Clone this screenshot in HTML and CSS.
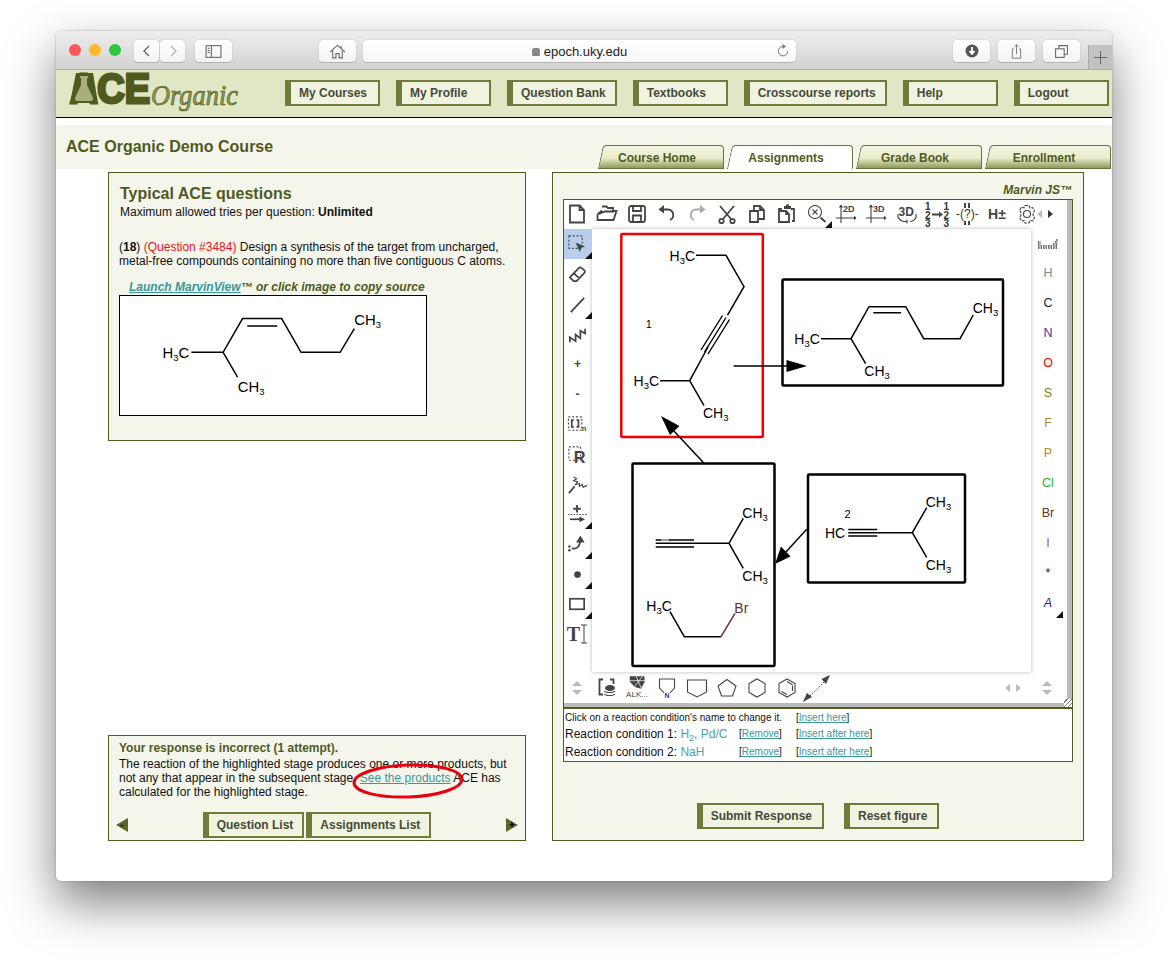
FILE: index.html
```html
<!DOCTYPE html>
<html lang="en">
<head>
    <meta charset="UTF-8">
    <meta name="viewport" content="width=device-width, initial-scale=1.0">
    <title>ACE Organic</title>
    <link rel="stylesheet" href="styles.css">
</head>
<body>
<div class="window">
    <div class="browser-bar">
        <div class="lights"><span class="light red"></span><span class="light yellow"></span><span class="light green"></span></div>
        <div class="bbtn-pair">
            <span class="bbtn nav-half"><svg class="bico" viewBox="0 0 14 14"><path d="M9 2 4 7l5 5"/></svg></span>
            <span class="bbtn nav-half"><svg class="bico faint" viewBox="0 0 14 14"><path d="m5 2 5 5-5 5"/></svg></span>
        </div>
        <span class="bbtn sidebar-btn"><svg class="bico thin" viewBox="0 0 16 14"><rect x="1" y="1.500" width="14" height="11"/><path d="M6 1.500v11M2.500 4H4.500M2.500 6H4.500M2.500 8H4.500"/></svg></span>
        <span class="bbtn home-btn"><svg class="bico thin" viewBox="0 0 16 14"><path d="M1 7.500 8 1l7 6.500M3.500 6v7h3V9h3v4h3V6M11.500 2v2.500"/></svg></span>
        <div class="address"><span class="lock"></span>epoch.uky.edu<svg class="reload" viewBox="0 0 14 14"><path d="M7 2.500a4.700 4.700 0 1 0 4.700 4.700"/><path class="solid" d="M6.500 0 10 2.500 6.500 5z"/></svg></div>
        <span class="bbtn right-btn"><svg class="bico" viewBox="0 0 14 14"><circle class="solid" cx="7" cy="7" r="6.500"/><path class="white-line" d="M7 3v6M4.500 7 7 9.800 9.500 7"/></svg></span>
        <span class="bbtn right-btn"><svg class="bico thin" viewBox="0 0 14 18"><path d="M4 6H2v11h10V6h-2M7 12V1M4.500 3.500 7 1l2.500 2.500"/></svg></span>
        <span class="bbtn right-btn"><svg class="bico thin" viewBox="0 0 14 14"><rect x="1.500" y="4.500" width="8" height="8"/><path d="M4.500 4.500v-3h8v8h-3"/></svg></span>
        <span class="new-tab"><svg class="bico thin" viewBox="0 0 14 14"><path d="M7 1v12M1 7h12"/></svg></span>
    </div>

    <header class="site-header">
        <svg class="logo" viewBox="68 70 185 47">
            <text class="logo-ace" x="70" y="103" textLength="80" lengthAdjust="spacingAndGlyphs">ACE</text>
            <path class="logo-block" d="M76 73h17l5 30H70z"/>
            <path class="logo-flask" d="M80 76h8v2h-1v7l6 13q.5 3-2 3H77q-2.500 0-2-3l6-13v-7h-1z"/>
            <text class="logo-organic" x="151" y="105" textLength="87" lengthAdjust="spacingAndGlyphs">Organic</text>
        </svg>
        <nav class="main-nav">
            <a class="btn nav-btn">My Courses</a>
            <a class="btn nav-btn">My Profile</a>
            <a class="btn nav-btn">Question Bank</a>
            <a class="btn nav-btn">Textbooks</a>
            <a class="btn nav-btn">Crosscourse reports</a>
            <a class="btn nav-btn">Help</a>
            <a class="btn nav-btn">Logout</a>
        </nav>
    </header>

    <div class="course-band">
        <h1 class="course-title">ACE Organic Demo Course</h1>
        <div class="tabs">
            <a class="tab">Course Home</a>
            <a class="tab active">Assignments</a>
            <a class="tab">Grade Book</a>
            <a class="tab">Enrollment</a>
        </div>
    </div>

    <main class="content">
        <div class="left-col">
            <section class="panel question">
                <h2>Typical ACE questions</h2>
                <p class="tries">Maximum allowed tries per question: <b>Unlimited</b></p>
                <p class="statement">(<b>18</b>) <span class="qnum">(Question #3484)</span> Design a synthesis of the target from uncharged, metal-free compounds containing no more than five contiguous C atoms.</p>
                <p class="launch"><a class="link">Launch MarvinView</a>™ or click image to copy source</p>
                <div class="target">
                    <svg class="mol" viewBox="119.500 295.500 307 120">
                        <path d="M190.700 352.300h32l19.600-34h39.400l19.600 34h39.400l14.300-24M222.700 352.300l14.600 25M247 325.700h30.300"/>
                        <text class="atom big" x="161.500" y="357.700">H<tspan class="sub" dy="3">3</tspan><tspan dy="-3">C</tspan></text>
                        <text class="atom big" x="355" y="324.300">CH<tspan class="sub" dy="3">3</tspan></text>
                        <text class="atom big" x="237.500" y="392.300">CH<tspan class="sub" dy="3">3</tspan></text>
                    </svg>
                </div>
            </section>

            <section class="panel feedback">
                <h3>Your response is incorrect (1 attempt).</h3>
                <p>The reaction of the highlighted stage produces one or more products, but not any that appear in the subsequent stage. <a class="link-plain">See the products</a> ACE has calculated for the highlighted stage.</p>
                <div class="feedback-nav">
                    <span class="pager prev">-</span>
                    <div class="feedback-btns">
                        <a class="btn">Question List</a>
                        <a class="btn">Assignments List</a>
                    </div>
                    <span class="pager next">+</span>
                </div>
                <svg class="callout" viewBox="0 0 112 40"><ellipse cx="56" cy="20" rx="54" ry="16" transform="rotate(-2 56 20)"/></svg>
            </section>
        </div>

        <section class="panel response">
            <div class="marvin-label">Marvin JS™</div>
            <div class="editor">
                <div class="sketch">
                    <div class="toolbar-top">
                        <span class="tool"><svg class="ico" viewBox="0 0 22 22"><path d="M4 2.500h9.500l4.500 4.500v12.500H4zM13.500 2.500V7H18"/></svg></span>
                        <span class="tool"><svg class="ico" viewBox="0 0 22 22"><path d="M1.500 11.500 9 8.500h8V5h-5l-1.500-1.500H6M1.500 11.500V17h16l3-9h-3M1.500 11.500l4.500-4"/></svg></span>
                        <span class="tool"><svg class="ico" viewBox="0 0 22 22"><rect x="3" y="3" width="16" height="16" rx="2"/><path d="M7 3v5h8V3M7 19v-6.500h8V19"/></svg></span>
                        <span class="tool"><svg class="ico" viewBox="0 0 22 22"><path d="M6 6.500h6a5.500 5.500 0 0 1 2 10.500"/><path class="solid" d="M8 2v8.500L2.500 6.500z"/></svg></span>
                        <span class="tool"><svg class="ico off" viewBox="0 0 22 22"><path d="M16 6.500h-6a5.500 5.500 0 0 0-2 10.500"/><path class="solid" d="M14 2v8.500l5.500-4z"/></svg></span>
                        <span class="tool"><svg class="ico" viewBox="0 0 22 22"><path d="M4 3l11 13M18 3 7 16"/><circle cx="5.500" cy="18" r="2.200"/><circle cx="16.500" cy="18" r="2.200"/></svg></span>
                        <span class="tool"><svg class="ico" viewBox="0 0 22 22"><path d="M4 8h8v11H4zM8 8V3h6l4 4v9h-6M14 3v4h4"/></svg></span>
                        <span class="tool"><svg class="ico" viewBox="0 0 22 22"><path d="M5 6H3v13h10v-8l-3-3H5zM10 8v3h3M15 6h3v12h-2"/><path class="solid" d="M8 3h2V1.500h3V3h2v3H8z"/></svg></span>
                        <span class="tool menu"><svg class="ico thin" viewBox="0 0 22 22"><circle cx="9" cy="9" r="6.500"/><path d="M6.500 6.500l5 5M11.500 6.500l-5 5"/><path class="handle" d="M14.500 14.500l5 4.500"/></svg></span>
                        <span class="tool"><svg class="ico thin" viewBox="0 0 22 22"><path d="M5 2v18M0 15h20M5 2 3.500 4.500M5 2l1.500 2.500M20 15l-2-1.500M20 15l-2 1.500"/><text class="ico-text" x="7" y="9">2D</text></svg></span>
                        <span class="tool"><svg class="ico thin" viewBox="0 0 22 22"><path d="M5 2v18M0 15h20M5 2 3.500 4.500M5 2l1.500 2.500M20 15l-2-1.500M20 15l-2 1.500"/><text class="ico-text" x="7" y="9">3D</text></svg></span>
                        <span class="tool"><svg class="ico thin" viewBox="0 0 22 22"><text class="ico-text big" x="2.500" y="13">3D</text><path d="M2 11c-1 6 5 8 9 7.500M20 11c1 5-3 7.500-6 7.500M11 16.500v4"/></svg></span>
                        <span class="tool"><svg class="ico thin full" viewBox="0 0 30 30"><text class="ico-num" x="3" y="11">1</text><text class="ico-num" x="3" y="19.500">2</text><text class="ico-num" x="3" y="28">3</text><text class="ico-num" x="21.500" y="11">1</text><text class="ico-num" x="21.500" y="19.500">2</text><text class="ico-num" x="21.500" y="28">3</text><path class="handle" d="M10 15.500h9"/><path class="solid" d="M17 12.500l4 3-4 3z"/></svg></span>
                        <span class="tool"><svg class="ico thin full" viewBox="0 0 30 30"><text class="ico-query" x="4" y="18.500">-(?)-</text><path class="handle" d="M13 4v5M17 4v5M13 22v4M17 22v4"/></svg></span>
                        <span class="tool h-plus">H±</span>
                        <span class="tool"><svg class="ico thin" viewBox="0 0 22 22"><circle cx="11" cy="11" r="3.500"/><path d="M9 2.500h4l1 2.500 2.500-.5 2 3.500-1.500 2 .1 2.500 1.400 2-2 3.500-2.500-.5-1 2.500H9l-1-2.500-2.500.5-2-3.500L5 12l-.1-2.500-1.400-2 2-3.500L8 5z" stroke-dasharray="3 1"/></svg></span>
                        <span class="scroll-arrows"><i class="tri left off"></i><i class="tri right"></i></span>
                    </div>

                    <div class="toolbar-left">
                        <span class="tool selected menu"><svg class="ico" viewBox="0 0 22 22"><rect class="dash" x="2" y="2" width="14" height="13"/><path class="solid" d="M9 9l10 4-4 1.500L13.500 19z"/></svg></span>
                        <span class="tool"><svg class="ico" viewBox="0 0 22 22"><path d="M3 14 12 4.500q1.500-1.500 3-.5l3 2.500q1.500 1.500 0 3L10 18H7zM7 9.500l6 5.500"/></svg></span>
                        <span class="tool menu"><svg class="ico" viewBox="0 0 22 22"><path d="M4 19 18 4"/></svg></span>
                        <span class="tool"><svg class="ico" viewBox="0 0 22 22"><path d="M3 19v-5l6 4v-7l5 4V7l5 3V5"/></svg></span>
                        <span class="tool atom-sign">+</span>
                        <span class="tool atom-sign">-</span>
                        <span class="tool"><svg class="ico" viewBox="0 0 22 22"><rect class="dash" x="1.500" y="3" width="14" height="14"/><path d="M7 6.500H5v7h2M10 6.500h2v7h-2"/><text class="ico-n gray" x="15.500" y="18">n</text></svg></span>
                        <span class="tool"><svg class="ico" viewBox="0 0 22 22"><rect class="dash" x="2" y="3" width="12" height="14"/><text class="ico-r" x="7" y="20">R</text></svg></span>
                        <span class="tool"><svg class="ico" viewBox="0 0 22 22"><path d="M2 20 8 13"/><path class="thin-line" d="M7 3l3 2-3 2 4 1-2 3 4-1v3l3-2 1 3 3-2 1 1"/></svg></span>
                        <span class="tool menu"><svg class="ico" viewBox="0 0 22 22"><path class="handle" d="M6.500 5h8M10.500 1v8"/><path class="dotted" d="M1 11h20"/><path d="M3 16h12"/><path class="solid" d="M13 13l6 3-6 3z"/></svg></span>
                        <span class="tool menu"><svg class="ico" viewBox="0 0 22 22"><path d="M5 15c5 1 8-1 9-8"/><path class="solid" d="M14 1.500 18.500 9h-9z"/><circle class="solid" cx="2.500" cy="13" r="1.300"/><circle class="solid" cx="2.500" cy="17" r="1.300"/></svg></span>
                        <span class="tool menu"><svg class="ico" viewBox="0 0 22 22"><circle class="solid" cx="11" cy="11" r="3.500"/></svg></span>
                        <span class="tool menu"><svg class="ico" viewBox="0 0 22 22"><rect x="3" y="5" width="15" height="11"/></svg></span>
                        <span class="tool t-tool">T<svg class="cursor" viewBox="0 0 8 20"><path d="M4 1v18M1 1h6M1 19h6"/></svg></span>
                    </div>

                    <div class="canvas">
                        <svg class="mol" viewBox="592 229 439 443">
                            <rect class="stage current" x="621.300" y="234" width="141.500" height="203" rx="1"/>
                            <rect class="stage" x="782.500" y="279.500" width="220.500" height="106" rx="1"/>
                            <rect class="stage" x="632.500" y="463.500" width="142" height="202.500" rx="1"/>
                            <rect class="stage" x="808" y="474.500" width="157" height="108" rx="1"/>

                            <path d="M696 255.300h30l18 31.400-16.500 28.500M708 347l-18.300 33.700H660M689.700 380.700l14.300 25"/>
                            <path class="thin-line" d="M726 317.500 704.500 352M729.500 319.500 708 354M722.500 315.500 701 350"/>
                            <text class="atom" x="669.500" y="261">H<tspan class="sub" dy="3">3</tspan><tspan dy="-3">C</tspan></text>
                            <text class="atom" x="633.500" y="386">H<tspan class="sub" dy="3">3</tspan><tspan dy="-3">C</tspan></text>
                            <text class="atom" x="703" y="417.700">CH<tspan class="sub" dy="3">3</tspan></text>
                            <text class="atom small" x="645.700" y="327.700">1</text>

                            <path d="M821 338.700h30l18-32h36.700l18 32H960l13.300-23.700M851 338.700l14.700 25M873.300 312.700H901"/>
                            <text class="atom" x="794.300" y="344.300">H<tspan class="sub" dy="3">3</tspan><tspan dy="-3">C</tspan></text>
                            <text class="atom" x="972.700" y="313">CH<tspan class="sub" dy="3">3</tspan></text>
                            <text class="atom" x="864.300" y="376">CH<tspan class="sub" dy="3">3</tspan></text>

                            <path d="M877.300 532.700h35l14.400-25M912.300 532.700l14.400 24.600"/>
                            <path class="thin-line" d="M848.300 529.500h29M848.300 532.700h29M848.300 536h29"/>
                            <text class="atom" x="825" y="537.700">HC</text>
                            <text class="atom" x="925.700" y="506.700">CH<tspan class="sub" dy="3">3</tspan></text>
                            <text class="atom" x="925.700" y="570.300">CH<tspan class="sub" dy="3">3</tspan></text>
                            <text class="atom small" x="844.500" y="517.700">2</text>

                            <path d="M694 543.300h35l14.300-25M729 543.300l14.300 25"/>
                            <path class="thin-line" d="M655.700 540h38.300M655.700 543.300h38.300M655.700 547h38.300"/>
                            <path class="gray-seg" d="M661 540h8"/>
                            <path d="M670 611.700l14.300 25H721"/>
                            <path class="br-bond" d="M721 636.700l14-23.400"/>
                            <text class="atom" x="742.300" y="518">CH<tspan class="sub" dy="3">3</tspan></text>
                            <text class="atom" x="742.300" y="581.300">CH<tspan class="sub" dy="3">3</tspan></text>
                            <text class="atom" x="646.300" y="610.700">H<tspan class="sub" dy="3">3</tspan><tspan dy="-3">C</tspan></text>
                            <text class="atom br" x="734.300" y="613.300">Br</text>

                            <path d="M733.700 366H790M806.700 529.300 785 553M704 463.300 673 430"/>
                            <path class="solid" d="M807 366l-20.500-6v12zM775 564l15.500-7.500-9.500-10zM661 416l9 19 9.500-9z"/>
                        </svg>
                    </div>

                    <div class="toolbar-right">
                        <span class="elem"><svg class="ico" viewBox="0 0 22 22"><path class="dotted dense" d="M1 16h20M1 14h20M1 12h3M1 10h3M16 12h5M18 10h3M19 8h2"/></svg></span>
                        <span class="elem el-h">H</span>
                        <span class="elem el-c">C</span>
                        <span class="elem el-n">N</span>
                        <span class="elem el-o">O</span>
                        <span class="elem el-s">S</span>
                        <span class="elem el-f">F</span>
                        <span class="elem el-p">P</span>
                        <span class="elem el-cl">Cl</span>
                        <span class="elem el-br">Br</span>
                        <span class="elem el-i">I</span>
                        <span class="elem el-star">*</span>
                        <span class="elem el-a menu">A</span>
                    </div>

                    <div class="toolbar-bottom">
                        <span class="tool updown"><i class="tri up"></i><i class="tri down"></i></span>
                        <span class="tool"><svg class="ico" viewBox="0 0 22 22"><path d="M7 2.500H3.500v15H7M14 2.500h3.500V7"/><ellipse class="solid" cx="14" cy="11" rx="5" ry="3"/><path class="thin-line" d="M8.500 14c1 2 9 2 10.500 0M8.500 17c1 2 9 2 10.500 0"/></svg></span>
                        <span class="tool alk"><svg class="ico" viewBox="0 0 22 16"><path class="solid" d="M3 1h16l.5 6-4 8-7-2L3 7z"/><path class="white-line" d="M10 1l6 14M17 1 8 13M3 6h17"/></svg><span class="alk-label">ALK...</span></span>
                        <span class="tool"><svg class="ico thin" viewBox="0 0 22 22"><path d="M3.500 2h15v9L14 16M8 16 3.500 11V2"/><text class="ico-n" x="8.500" y="21">N</text></svg></span>
                        <span class="tool"><svg class="ico thin" viewBox="0 0 22 22"><path d="M1.500 3h19v12l-9.500 5-9.500-5z"/></svg></span>
                        <span class="tool"><svg class="ico thin" viewBox="0 0 22 22"><path d="M11 2.500 20 9l-3.500 10h-11L2 9z"/></svg></span>
                        <span class="tool"><svg class="ico thin" viewBox="0 0 22 22"><path d="M11 2l8 4.500v9l-8 4.500-8-4.500v-9z"/></svg></span>
                        <span class="tool"><svg class="ico thin" viewBox="0 0 22 22"><path d="M11 2l8 4.500v9l-8 4.500-8-4.500v-9zM11 4.500l5.500 3.200M16.500 8.500v5.500M5.500 14.500l5.500 3"/></svg></span>
                        <span class="tool"><svg class="ico full" viewBox="0 0 30 30"><path class="dotted" d="M6 25 24 7"/><path class="solid" d="M1 29l4-9 5 4zM28 2l-8.500 4 4.500 5z"/></svg></span>
                        <span class="bottom-spacer"></span>
                        <span class="scroll-arrows"><i class="tri left off"></i><i class="tri right off"></i></span>
                        <span class="tool updown last"><i class="tri up"></i><i class="tri down"></i></span>
                    </div>
                    <span class="grip"></span>
                </div>
                <div class="conditions">
                    <span class="cond-note">Click on a reaction condition's name to change it.</span>
                    <span class="cond-link">[<a>Insert here</a>]</span>

                    <span class="cond-name">Reaction condition 1: <a>H<sub>2</sub>, Pd/C</a></span>
                    <span class="cond-link">[<a>Remove</a>]</span>
                    <span class="cond-link">[<a>Insert after here</a>]</span>

                    <span class="cond-name">Reaction condition 2: <a>NaH</a></span>
                    <span class="cond-link">[<a>Remove</a>]</span>
                    <span class="cond-link">[<a>Insert after here</a>]</span>
                </div>
            </div>
            <div class="submit-row">
                <a class="btn">Submit Response</a>
                <a class="btn">Reset figure</a>
            </div>
        </section>
    </main>
</div>
</body>
</html>
```

FILE: styles.css
```css
body {
    margin: 0;
    height: 961px;
    overflow: hidden;
    background-color: #fff;
    font-family: "Liberation Sans", Arial, sans-serif;
    font-size: 12px;
    color: #111;
}

p, h1, h2, h3 {
    margin: 0;
}

.window {
    position: relative;
    margin: 31px 56px 0;
    width: 1056px;
    height: 850px;
    background-color: #fff;
    border-radius: 5px;
    box-shadow: 0 22px 48px rgba(0, 0, 0, 0.5), 0 0 2px rgba(0, 0, 0, 0.35);
    overflow: hidden;
}

/* browser chrome */
.browser-bar {
    height: 39px;
    display: flex;
    align-items: flex-start;
    padding-top: 9px;
    box-sizing: border-box;
    background: linear-gradient(#eeeeee, #d2d2d2);
    border-bottom: 1px solid #aeaeae;
}

.lights {
    display: flex;
    gap: 8px;
    margin: 4px 0 0 13px;
}

.light {
    width: 12px;
    height: 12px;
    border-radius: 50%;
}

.red { background-color: #f9575a; }
.yellow { background-color: #fdb92c; }
.green { background-color: #2fc53f; }

.bbtn {
    display: flex;
    align-items: center;
    justify-content: center;
    height: 22px;
    background: linear-gradient(#fff, #f3f3f3);
    border-radius: 4px;
    box-shadow: 0 0 1px rgba(0, 0, 0, 0.45), 0 1px 0 rgba(0, 0, 0, 0.12);
}

.bbtn-pair {
    display: flex;
    gap: 1px;
    margin-left: 13px;
}

.nav-half { width: 25px; }
.sidebar-btn { width: 37px; margin-left: 10px; }
.home-btn { width: 37px; margin-left: 87px; }
.right-btn { width: 37px; margin-right: 8px; }

.bico {
    width: 14px;
    height: 14px;
    fill: none;
    stroke: #666;
    stroke-width: 1.400;
}

.bico.thin { stroke-width: 1; width: 17px; height: 15px; }
.bico.faint { stroke: #b5b5b5; }
.bico .solid { fill: #555; stroke: none; }
.bico .white-line { stroke: #fff; stroke-width: 1.800; }

.address {
    position: relative;
    width: 433px;
    height: 22px;
    margin: 0 157px 0 7px;
    display: flex;
    align-items: center;
    justify-content: center;
    font-size: 13px;
    color: #222;
    background: linear-gradient(#fff, #f7f7f7);
    border-radius: 4px;
    box-shadow: 0 0 1px rgba(0, 0, 0, 0.45), 0 1px 0 rgba(0, 0, 0, 0.12);
}

.lock {
    width: 8px;
    height: 7px;
    margin: 2px 4px 0 0;
    background-color: #888;
    border-radius: 1px;
    box-shadow: 0 -2px 0 -1px #888;
}

.reload {
    position: absolute;
    right: 6px;
    top: 4px;
    width: 14px;
    height: 14px;
    fill: none;
    stroke: #777;
}

.reload .solid { fill: #777; stroke: none; }

.new-tab {
    position: absolute;
    right: 0;
    top: 14px;
    width: 24px;
    height: 24px;
    display: flex;
    align-items: center;
    justify-content: center;
    background-color: #c2c2c2;
    border-left: 1px solid #aaa;
    box-sizing: border-box;
}

/* site header */
.site-header {
    height: 48px;
    display: flex;
    align-items: flex-start;
    box-sizing: border-box;
    background-color: #e1e7c5;
    border-bottom: 1px solid #000;
}

.logo {
    flex: none;
    width: 185px;
    height: 47px;
    margin-left: 12px;
    overflow: visible;
}

.logo-ace {
    font-family: "Liberation Sans", Arial, sans-serif;
    font-size: 42px;
    font-weight: bold;
    fill: #4f5a1e;
    stroke: #4f5a1e;
    stroke-width: 3;
}

.logo-block { fill: #4f5a1e; }
.logo-flask { fill: #a8ae7d; }

.logo-organic {
    font-family: "Liberation Serif", "Times New Roman", serif;
    font-size: 30px;
    font-style: italic;
    fill: #8d9b58;
    stroke: #4f5a1e;
    stroke-width: 0.700;
}

.main-nav {
    display: flex;
    gap: 16px;
    margin: 10px 0 0 32px;
}

.btn {
    display: inline-flex;
    align-items: center;
    box-sizing: border-box;
    height: 26px;
    padding: 0 9px 0 8px;
    font-size: 12px;
    font-weight: bold;
    color: #454a38;
    background-color: #f0f3e0;
    border: 2px solid #6f7a3b;
    border-left-width: 6px;
    white-space: nowrap;
}

.nav-btn { min-width: 95px; }

/* course band and tabs */
.course-band {
    position: relative;
    z-index: 0;
    height: 44px;
    margin-top: 7px;
    display: flex;
    justify-content: space-between;
    align-items: flex-end;
    background-color: #f4f6ec;
}

.course-title {
    margin: 0 0 13px 10px;
    font-size: 16px;
    line-height: 18px;
    color: #4f5a1e;
}

.tabs {
    display: flex;
    gap: 3px;
    margin-right: 1px;
}

.tab {
    position: relative;
    width: 108px;
    height: 24px;
    margin-left: 18px;
    box-sizing: border-box;
    display: flex;
    align-items: center;
    justify-content: center;
    padding: 1px 25px 0 0;
    font-size: 12px;
    font-weight: bold;
    color: #4f5a1e;
    white-space: nowrap;
    background: linear-gradient(#f3f5df 0%, #e9edcd 55%, #8f9a58 100%);
    border: 1px solid #69713f;
    border-left: none;
    border-radius: 0 4px 0 0;
}

.tab::before {
    content: "";
    position: absolute;
    top: -1px;
    bottom: -1px;
    left: -13px;
    width: 22px;
    background: inherit;
    border: 1px solid #69713f;
    border-right: none;
    border-radius: 4px 0 0 0;
    transform: skewX(-12deg);
    transform-origin: top right;
    z-index: -1;
}

.tab.active {
    background: #fff;
    border-bottom-color: #fff;
}

.tab.active::before {
    border-bottom: none;
}

/* main layout */
.content {
    position: relative;
    z-index: 0;
    display: flex;
    gap: 26px;
    padding: 3px 28px 0 52px;
}

.left-col {
    width: 418px;
    height: 669px;
    display: flex;
    flex-direction: column;
    justify-content: space-between;
}

.panel {
    box-sizing: border-box;
    background-color: #f4f6ec;
    border: 1px solid #4f5a1e;
}

.question {
    height: 269px;
    padding: 12px 10px 0 10px;
}

.question h2 {
    margin-left: 1px;
    font-size: 16px;
    line-height: 18px;
    color: #4f5a1e;
}

.tries {
    margin: 2px 0 0 1px;
    line-height: 15px;
}

.statement {
    margin-top: 20px;
    line-height: 14px;
}

.qnum { color: #f01020; }

.launch {
    margin: 12px 0 0 10px;
    line-height: 14px;
    font-weight: bold;
    font-style: italic;
    color: #4f5a1e;
}

.link {
    color: #38989a;
    text-decoration: underline;
}

.target {
    box-sizing: border-box;
    width: 308px;
    height: 121px;
    margin-top: 1px;
    background-color: #fff;
    border: 1px solid #000;
}

.mol {
    display: block;
    width: 100%;
    height: 100%;
    fill: none;
    stroke: #000;
    stroke-width: 1.500;
}

.atom {
    font-family: "Liberation Sans", Arial, sans-serif;
    font-size: 14px;
    fill: #000;
    stroke: none;
}

.atom.big { font-size: 15px; }
.atom.small { font-size: 11px; }
.atom.br { fill: #6b2c2c; }
.sub { font-size: 9.500px; }
.thin-line { stroke-width: 1.400; }
.br-bond { stroke: #6b2c2c; }
.gray-seg { stroke: #bbb; }

.stage {
    stroke: #000;
    stroke-width: 2.500;
}

.stage.current {
    stroke: #f00000;
}

.mol .solid {
    fill: #000;
    stroke: none;
}

/* feedback box */
.feedback {
    position: relative;
    height: 106px;
    padding: 5px 10px 0 10px;
    line-height: 14px;
}

.feedback h3 {
    font-size: 12px;
    line-height: 14px;
    color: #4f5a1e;
}

.feedback p {
    margin-top: 2px;
}

.link-plain {
    color: #38989a;
    text-decoration: underline;
}

.feedback-nav {
    display: flex;
    align-items: center;
    justify-content: space-between;
    margin: 13px -3px 0 -3px;
}

.feedback-btns {
    display: flex;
    gap: 2px;
}

.pager {
    width: 12px;
    height: 14px;
    display: flex;
    align-items: center;
    justify-content: center;
    font-size: 10px;
    font-weight: bold;
    color: #000;
    background-color: #5c6626;
}

.pager.prev { clip-path: polygon(0 50%, 100% 0, 100% 100%); }
.pager.next { clip-path: polygon(0 0, 100% 50%, 0 100%); }

.callout {
    position: absolute;
    left: 243px;
    top: 25px;
    width: 112px;
    height: 40px;
    fill: none;
    stroke: #e8000f;
    stroke-width: 3;
}

/* Marvin panel */
.response {
    width: 532px;
    height: 669px;
    padding: 10px 10px 0 10px;
}

.marvin-label {
    margin-right: 1px;
    height: 16px;
    text-align: right;
    font-size: 12px;
    line-height: 14px;
    font-weight: bold;
    font-style: italic;
    color: #4f5a1e;
}

.editor {
    box-sizing: border-box;
    width: 510px;
    height: 563px;
    background-color: #fff;
    border: 1px solid #4f5a1e;
}

.sketch {
    position: relative;
    box-sizing: border-box;
    height: 507px;
    display: grid;
    grid-template-columns: 28px 439px 32px;
    grid-template-rows: 29px 443px 31px;
    border-right: 5px solid #bbb;
    border-bottom: 4px solid #bbb;
}

.grip {
    position: absolute;
    right: -5px;
    bottom: -4px;
    width: 8px;
    height: 8px;
    background: repeating-linear-gradient(135deg, #fff 0 2px, #777 2px 3px);
}

.toolbar-top {
    grid-column: 1 / 4;
    display: flex;
    margin-left: -2px;
}

.tool {
    position: relative;
    flex: none;
    width: 30px;
    height: 30px;
    display: flex;
    align-items: center;
    justify-content: center;
}

.toolbar-top .tool { height: 28px; }

.ico {
    width: 22px;
    height: 22px;
    flex: none;
    fill: none;
    stroke: #444;
    stroke-width: 1.800;
}

.ico.thin { stroke-width: 1.100; }
.ico.full { width: 30px; height: 30px; }
.ico.off { stroke: #aaa; }
.ico.off .solid { fill: #aaa; }
.ico .solid { fill: #444; stroke: none; }
.ico .white-line { stroke: #fff; stroke-width: 0.800; }
.ico .dash { stroke-dasharray: 2 2; stroke-width: 1.200; }
.ico .dotted { stroke-dasharray: 1.500 1.500; stroke-width: 1; }
.ico .dotted.dense { stroke-dasharray: 1.500 1; stroke-width: 1.500; }
.ico .thin-line { stroke-width: 1.200; }
.ico .handle { stroke-width: 2; }

.ico-text {
    font-family: "Liberation Sans", Arial, sans-serif;
    font-size: 9px;
    font-weight: bold;
    fill: #444;
    stroke: none;
}

.ico-text.big { font-size: 12px; }

.ico-num {
    font-family: "Liberation Sans", Arial, sans-serif;
    font-size: 10px;
    font-weight: bold;
    fill: #333;
    stroke: none;
}

.ico-query {
    font-family: "Liberation Sans", Arial, sans-serif;
    font-size: 12px;
    fill: #333;
    stroke: none;
}

.ico-r {
    font-family: "Liberation Sans", Arial, sans-serif;
    font-size: 17px;
    font-weight: bold;
    fill: #444;
    stroke: none;
}

.ico-n {
    font-family: "Liberation Sans", Arial, sans-serif;
    font-size: 7px;
    font-weight: bold;
    fill: #2a2aa0;
    stroke: none;
}

.ico-n.gray { fill: #444; font-size: 8px; }

.h-plus {
    font-size: 14px;
    font-weight: bold;
    color: #444;
}

.scroll-arrows {
    display: flex;
    align-items: center;
    gap: 6px;
    flex: none;
    height: 28px;
}

.toolbar-top .scroll-arrows { margin-left: -5px; }

.tri {
    display: block;
    width: 0;
    height: 0;
}

.tri.left {
    border-top: 4px solid transparent;
    border-bottom: 4px solid transparent;
    border-right: 5px solid #333;
}

.tri.right {
    border-top: 4px solid transparent;
    border-bottom: 4px solid transparent;
    border-left: 5px solid #333;
}

.tri.left.off { border-right-color: #bbb; }
.tri.right.off { border-left-color: #bbb; }

.tri.up {
    border-left: 5px solid transparent;
    border-right: 5px solid transparent;
    border-bottom: 5px solid #bbb;
}

.tri.down {
    border-left: 5px solid transparent;
    border-right: 5px solid transparent;
    border-top: 5px solid #bbb;
}

.menu::after {
    content: "";
    position: absolute;
    right: 0;
    bottom: 0;
    width: 0;
    height: 0;
    border-left: 7px solid transparent;
    border-bottom: 7px solid #111;
}

.toolbar-left {
    display: flex;
    flex-direction: column;
}

.toolbar-left .tool {
    width: 28px;
    padding-right: 1px;
    box-sizing: border-box;
}

.toolbar-left .ico {
    width: 21px;
    height: 21px;
}

.selected { background-color: #b9cdec; }

.atom-sign {
    font-size: 12px;
    font-weight: bold;
    color: #444;
}

.t-tool {
    font-family: "Liberation Serif", "Times New Roman", serif;
    font-size: 20px;
    font-weight: bold;
    color: #444;
}

.cursor {
    flex: none;
    width: 8px;
    height: 20px;
    fill: none;
    stroke: #444;
}

.canvas {
    background-color: #fff;
    box-shadow: 0 0 4px rgba(0, 0, 0, 0.28);
}

.toolbar-right {
    display: flex;
    flex-direction: column;
    align-items: center;
    padding-left: 2px;
    margin-top: -1px;
}

.elem {
    position: relative;
    flex: none;
    width: 30px;
    height: 30px;
    display: flex;
    align-items: center;
    justify-content: center;
    font-size: 12.500px;
}

.el-h { color: #888; }
.el-c { color: #222; }
.el-n { color: #3838b0; }
.el-o { color: #f00; }
.el-s { color: #7d7d20; }
.el-f { color: #b08a30; }
.el-p { color: #b08a30; }
.el-cl { color: #2fb01e; }
.el-br { color: #6b2c2c; }
.el-i { color: #9050c0; }
.el-star { color: #222; }
.el-a { color: #23238e; font-style: italic; }

.toolbar-bottom {
    grid-column: 1 / 4;
    display: flex;
    align-items: center;
    margin-left: -2px;
}

.updown {
    flex-direction: column;
    gap: 4px;
}

.alk {
    flex-direction: column;
    padding-bottom: 1px;
    box-sizing: border-box;
}

.alk .ico {
    width: 20px;
    height: 15px;
}

.alk-label {
    font-size: 8px;
    line-height: 9px;
    color: #444;
}

.bottom-spacer {
    flex: 1;
}

.toolbar-bottom .scroll-arrows { margin-right: 11px; }
.toolbar-bottom .last { margin-right: 1px; }

/* reaction conditions */
.conditions {
    display: grid;
    grid-template-columns: 174px 57px auto;
    grid-template-rows: 16px 17px 19px;
    align-items: center;
    padding: 0 0 0 1px;
    border-top: 2px solid #4f5a1e;
}

.cond-note {
    grid-column: 1 / 3;
    font-size: 10px;
    white-space: nowrap;
}

.cond-name {
    font-size: 12px;
    white-space: nowrap;
}

.cond-name a {
    color: #4aa3a3;
}

.cond-name sub {
    font-size: 9px;
    line-height: 0;
}

.cond-link {
    font-size: 10px;
    white-space: nowrap;
}

.cond-link a {
    color: #38989a;
    text-decoration: underline;
}

.submit-row {
    display: flex;
    justify-content: center;
    gap: 20px;
    margin-top: 41px;
}

.submit-row .btn {
    padding-right: 10px;
}
```
